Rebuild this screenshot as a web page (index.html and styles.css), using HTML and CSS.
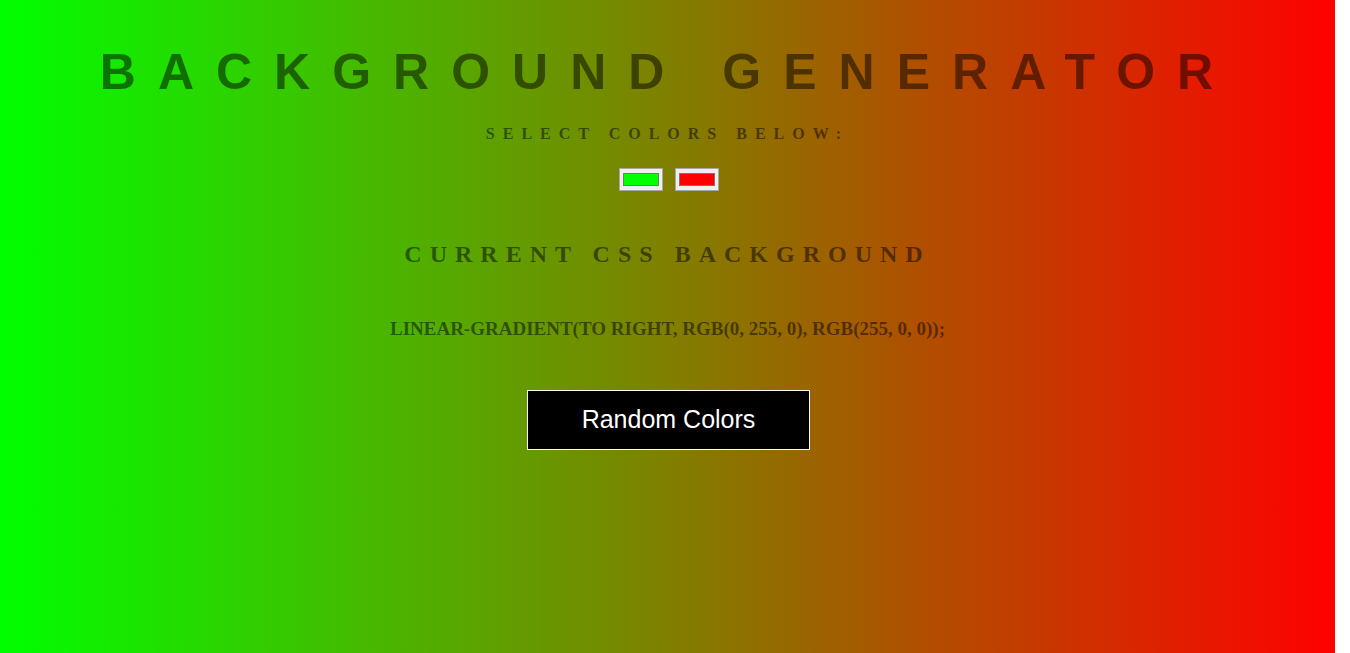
FILE: index.html
```html
<!DOCTYPE html>
<html lang="en">
<head>
<meta charset="utf-8">
<title>Background Generator</title>
<link rel="stylesheet" href="styles.css">
</head>
<body>
<main class="page">
  <h1 class="title">BACKGROUND GENERATOR</h1>
  <h3 class="subtitle">SELECT COLORS BELOW:</h3>
  <div class="pickers">
    <input class="picker" type="color" value="#00ff00" aria-label="Color 1">
    <input class="picker" type="color" value="#ff0000" aria-label="Color 2">
  </div>
  <h2 class="heading">CURRENT CSS BACKGROUND</h2>
  <h3 class="css-value">LINEAR-GRADIENT(TO RIGHT, RGB(0, 255, 0), RGB(255, 0, 0));</h3>
  <button class="random" type="button">Random Colors</button>
</main>
</body>
</html>
```
FILE: styles.css
```css
html, body {
  margin: 0;
  padding: 0;
  background: #ffffff;
  height: 100%;
  overflow: hidden;
}

.page {
  margin-right: 15px;
  height: 100%;
  background: linear-gradient(to right, rgb(0, 255, 0), rgb(255, 0, 0));
  display: flex;
  flex-direction: column;
  align-items: center;
  text-align: center;
  color: rgba(0, 0, 0, 0.5);
  font-family: "Liberation Serif", "Times New Roman", serif;
}

.title {
  margin: 42px 0 0;
  font-family: "Liberation Sans", Arial, sans-serif;
  font-weight: bold;
  font-size: 50px;
  line-height: 60px;
  letter-spacing: 22px;
  white-space: nowrap;
}

.subtitle {
  margin: 21.6px 0 0;
  font-size: 16px;
  line-height: 20px;
  font-weight: bold;
  letter-spacing: 8px;
}

.pickers {
  margin: 24.4px 0 0 2px;
  display: flex;
  gap: 12px;
}

.picker {
  box-sizing: border-box;
  width: 44px;
  height: 23px;
  margin: 0;
  padding: 1px 2px;
  border: 1px solid #a7a7a7;
  background: #efefef;
  cursor: pointer;
  -webkit-appearance: none;
  appearance: none;
}

.picker::-webkit-color-swatch-wrapper {
  padding: 3px 1px;
}

.picker::-webkit-color-swatch {
  border: 1px solid #777777;
}

.heading {
  margin: 47.9px 0 0;
  font-size: 24px;
  line-height: 30px;
  font-weight: bold;
  letter-spacing: 8px;
}

.css-value {
  margin: 48.4px 0 0;
  font-size: 19px;
  line-height: 24px;
  font-weight: bold;
}

.random {
  margin: 48.7px 0 0 2px;
  box-sizing: border-box;
  width: 283px;
  height: 60px;
  background: #000000;
  color: #ffffff;
  border: 1px solid #ffffff;
  font-family: "Liberation Sans", Arial, sans-serif;
  font-size: 25px;
  padding: 0;
  cursor: pointer;
}
```
